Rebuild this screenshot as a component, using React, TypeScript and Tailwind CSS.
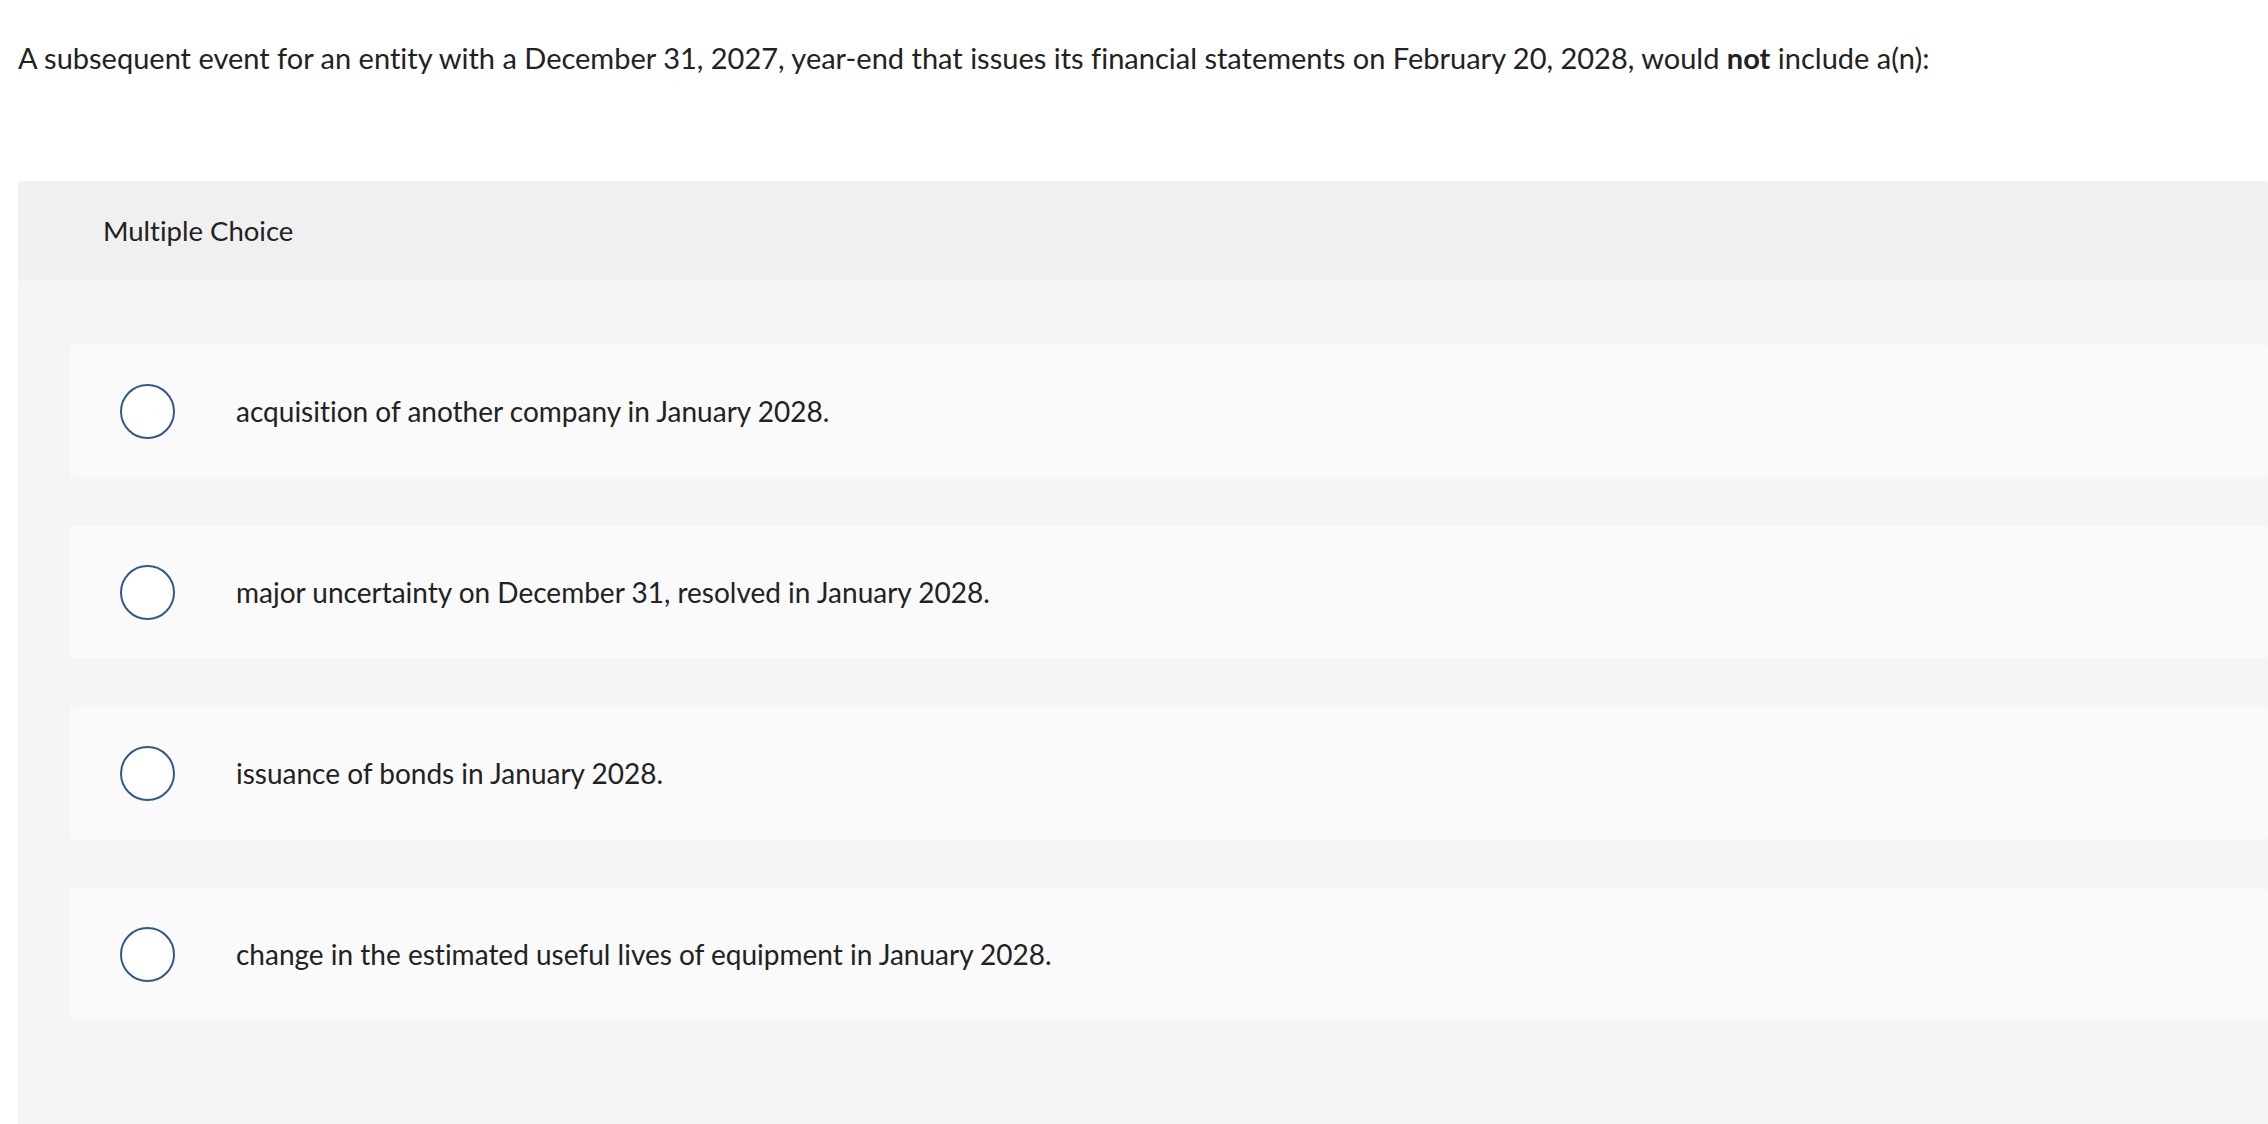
import React from 'react';

const options = [
    'acquisition of another company in January 2028.',
    'major uncertainty on December 31, resolved in January 2028.',
    'issuance of bonds in January 2028.',
    'change in the estimated useful lives of equipment in January 2028.',
];

const Option = ({ label }: { label: string }) => {
    return (
        <div className="flex h-[132px] items-center rounded-[4px] bg-[#fafafa] pl-[50px]">
            <span className="h-[55px] w-[55px] shrink-0 rounded-full border-2 border-[#2d5a8e] bg-white" />
            <span className="ml-[61px] text-[28px] text-[#222222]">{label}</span>
        </div>
    );
};

export default function App() {
    return (
        <div className="min-h-screen overflow-hidden bg-white font-['Lato',sans-serif] text-[#222222] [font-variant-ligatures:none]">
            <p className="pl-[18px] pt-[36px] text-[29px] leading-[44px]">
                A subsequent event for an entity with a December 31, 2027, year-end that issues its
                financial statements on February 20, 2028, would <strong className="font-bold">not</strong>{' '}
                include a(n):
            </p>
            <div className="ml-[18px] mt-[101px] rounded-t-[4px] bg-[#f5f5f5] pb-[120px]">
                <div className="flex h-[100px] items-center rounded-t-[4px] bg-[#f0f0f0] pl-[85px] text-[27.5px]">
                    Multiple Choice
                </div>
                <div className="flex flex-col gap-[49px] pl-[52px] pt-[64px]">
                    {options.map((o) => (
                        <Option key={o} label={o} />
                    ))}
                </div>
            </div>
        </div>
    );
}
